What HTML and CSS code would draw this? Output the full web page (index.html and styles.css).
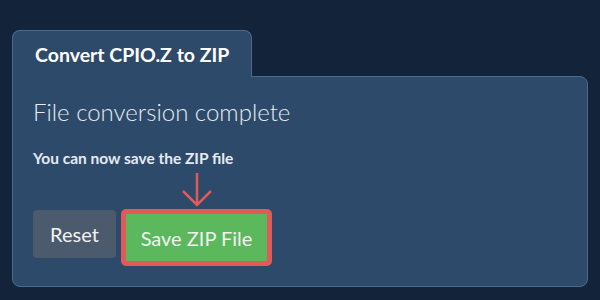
FILE: index.html
```html
<!DOCTYPE html>
<html lang="en">
<head>
  <meta charset="UTF-8" />
  <title>Convert CPIO.Z to ZIP</title>
  <link rel="stylesheet" href="styles.css">
</head>
<body>
  <div class="converter">
    <div class="tab">Convert CPIO.Z to ZIP</div>
    <div class="panel">
      <h2 class="status">File conversion complete</h2>
      <p class="hint">You can now save the ZIP file</p>
      <div class="actions">
        <button class="btn reset">Reset</button>
        <div class="save-wrap">
          <svg class="arrow" width="30" height="36" viewBox="0 0 30 36">
            <path d="M15 1 V33 M1 19 L15 33 L29 19" fill="none" stroke="#e05a57" stroke-width="2.5"/>
          </svg>
          <button class="btn save">Save ZIP File</button>
        </div>
      </div>
    </div>
  </div>
</body>
</html>
```

FILE: styles.css
```css
* {
  box-sizing: border-box;
}
body {
  margin: 0;
  background: #12233a;
  font-family: Lato, 'Open Sans', sans-serif;
  color: #fff;
  height: 300px;
  overflow: hidden;
}
.converter {
  padding: 30px 12px 0 12px;
}
.tab {
  display: inline-block;
  width: 240px;
  height: 47px;
  padding: 12px 0 0 22px;
  background: #2d4a6b;
  border: 1px solid #4c6a8b;
  border-bottom: none;
  border-radius: 8px 8px 0 0;
  font-weight: 700;
  font-size: 19.5px;
  position: relative;
  z-index: 1;
  margin-bottom: -1px;
}
.panel {
  background: #2d4a6b;
  border: 1px solid #4c6a8b;
  border-radius: 0 8px 8px 8px;
  height: 211px;
  padding: 20px 20px 0 20px;
}
.status {
  margin: 0;
  font-weight: 300;
  font-size: 24px;
  line-height: 29px;
  color: #e6ebf1;
}
.hint {
  margin: 23px 0 0 0;
  font-weight: 700;
  font-size: 15.5px;
  line-height: 19px;
  color: #e6ebf1;
}
.actions {
  display: flex;
  align-items: flex-end;
  gap: 5px;
  margin-top: 4px;
}
.save-wrap {
  display: flex;
  flex-direction: column;
  align-items: center;
}
.arrow {
  display: block;
  margin-bottom: 1px;
}
.btn {
  font-family: Lato, 'Open Sans', sans-serif;
  font-size: 20px;
  font-weight: 400;
  color: #f2f2f2;
  border: none;
  border-radius: 4px;
  cursor: pointer;
}
.reset {
  width: 83px;
  height: 48px;
  background: #4b5b6d;
  margin-bottom: 8px;
}
.save {
  width: 151px;
  height: 57px;
  background: #5cb85c;
  border: 5px solid #e05a57;
  border-radius: 5px;
  padding-top: 2px;
}
```
